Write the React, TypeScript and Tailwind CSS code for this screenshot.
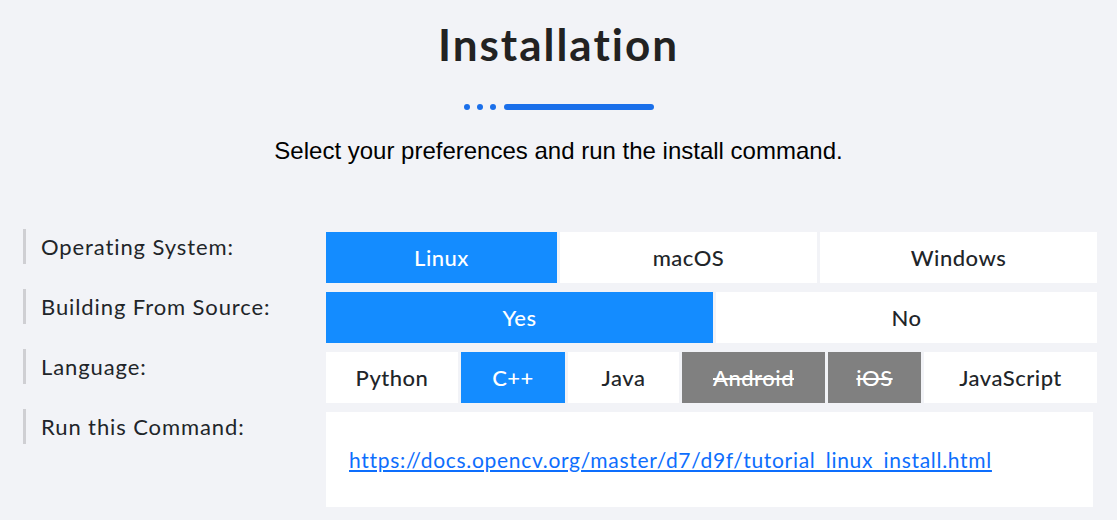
const font = { fontFamily: "Lato, 'Noto Sans', sans-serif" };

type Opt = { label: string; w: string; state?: "on" | "off" | "disabled" };

const rows: { label: string; options: Opt[] }[] = [
  {
    label: "Operating System:",
    options: [
      { label: "Linux", w: "w-[231px]", state: "on" },
      { label: "macOS", w: "w-[257px]" },
      { label: "Windows", w: "w-[277px]" }
    ]
  },
  {
    label: "Building From Source:",
    options: [
      { label: "Yes", w: "w-[387px]", state: "on" },
      { label: "No", w: "w-[381px]" }
    ]
  },
  {
    label: "Language:",
    options: [
      { label: "Python", w: "w-[132px]" },
      { label: "C++", w: "w-[104px]", state: "on" },
      { label: "Java", w: "w-[111px]" },
      { label: "Android", w: "w-[143px]", state: "disabled" },
      { label: "iOS", w: "w-[93px]", state: "disabled" },
      { label: "JavaScript", w: "w-[173px]" }
    ]
  }
];

function Label({ text }: { text: string }) {
  return (
    <div className="flex h-[35px] w-[303px] shrink-0 items-center border-l-[3px] border-[#cfcfd3] pl-[15px] text-[22px] tracking-[0.9px] text-[#212529]">
      {text}
    </div>
  );
}

function OptionButton({ opt }: { opt: Opt }) {
  const cls =
    opt.state === "on"
      ? "bg-[#148cff] text-white"
      : opt.state === "disabled"
        ? "bg-[#808080] text-white line-through"
        : "bg-white text-[#212529]";
  return (
    <div
      className={`flex h-[51px] shrink-0 items-center justify-center text-[22px] font-medium tracking-[0.5px] ${opt.w} ${cls}`}
    >
      {opt.label}
    </div>
  );
}

export default function App() {
  return (
    <div className="min-h-[520px] w-full bg-[#f2f3f7]" style={font}>
      <h1 className="pt-[19px] text-center text-[44px] font-bold leading-[50px] tracking-[2px] text-[#222222]">
        Installation
      </h1>
      <div className="mt-[35px] flex items-center justify-center gap-[7px]">
        <span className="h-[6px] w-[6px] rounded-full bg-[#1a6fea]" />
        <span className="h-[6px] w-[6px] rounded-full bg-[#1a6fea]" />
        <span className="h-[6px] w-[6px] rounded-full bg-[#1a6fea]" />
        <span className="ml-[1px] h-[6px] w-[150px] rounded-full bg-[#1a6fea]" />
      </div>
      <p
        className="mt-[26px] text-center text-[24px] leading-[30px] text-black"
        style={{ fontFamily: "'Liberation Sans', Arial, sans-serif" }}
      >
        Select your preferences and run the install command.
      </p>

      <div className="mt-[63px] flex flex-col pl-[23px]">
        {rows.map((row) => (
          <div key={row.label} className="flex h-[60px] items-start">
            <Label text={row.label} />
            <div className="mt-[3px] flex gap-[3px]">
              {row.options.map((o) => (
                <OptionButton key={o.label} opt={o} />
              ))}
            </div>
          </div>
        ))}
        <div className="flex items-start">
          <Label text="Run this Command:" />
          <div className="mt-[3px] flex h-[95px] w-[767px] items-center bg-white pl-[23px]">
            <a
              href="#"
              className="text-[21px] tracking-[0.7px] text-[#0d6efd] underline underline-offset-2"
            >
              https://docs.opencv.org/master/d7/d9f/tutorial_linux_install.html
            </a>
          </div>
        </div>
      </div>
    </div>
  );
}
